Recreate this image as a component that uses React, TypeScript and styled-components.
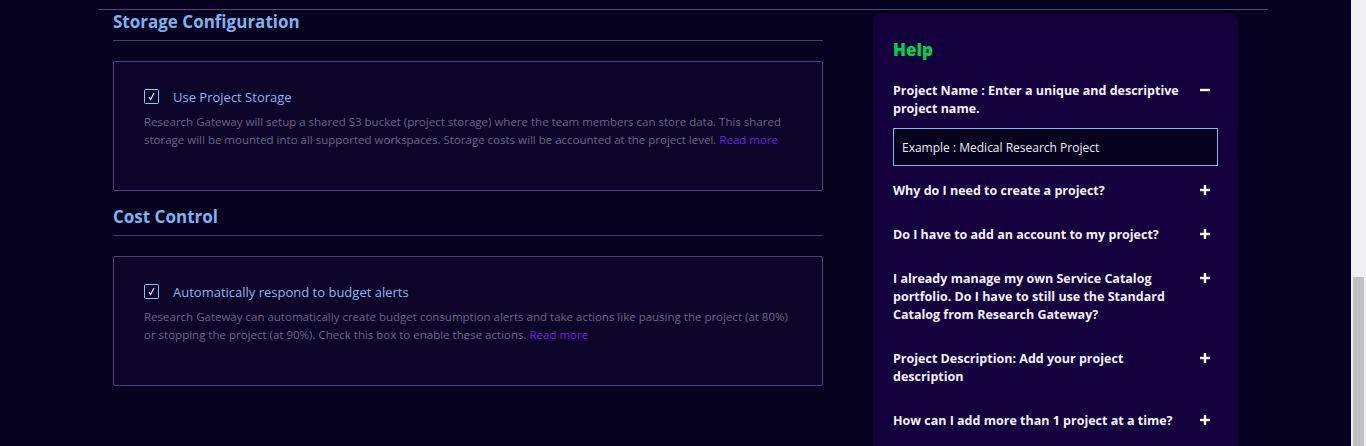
import React from 'react';
import styled, { createGlobalStyle } from 'styled-components';

const GlobalStyle = createGlobalStyle`
  body {
    margin: 0;
    background-color: #070220;
    font-family: 'Open Sans', 'Noto Sans', sans-serif;
  }
`;

interface IHelpItem {
  title: string;
  open?: boolean;
  example?: string;
}

const helpItems: IHelpItem[] = [
  {
    title: 'Project Name : Enter a unique and descriptive project name.',
    open: true,
    example: 'Example : Medical Research Project',
  },
  { title: 'Why do I need to create a project?' },
  { title: 'Do I have to add an account to my project?' },
  {
    title:
      'I already manage my own Service Catalog portfolio. Do I have to still use the Standard Catalog from Research Gateway?',
  },
  { title: 'Project Description: Add your project description' },
  { title: 'How can I add more than 1 project at a time?' },
];

function CheckIcon(): JSX.Element {
  return (
    <svg width="15" height="15" viewBox="0 0 15 15">
      <rect x="0.5" y="0.5" width="14" height="14" rx="1" fill="none" stroke="#8cc4f6" />
      <path d="M5 8.2 L6.6 10.6 L10 4" fill="none" stroke="#d8e8fb" strokeWidth="1.2" />
    </svg>
  );
}

function ToggleIcon({ open }: { open?: boolean }): JSX.Element {
  return (
    <svg width="10" height="10" viewBox="0 0 10 10">
      <rect x="0" y="3.8" width="10" height="2.4" fill="#ffffff" />
      {!open && <rect x="3.8" y="0" width="2.4" height="10" fill="#ffffff" />}
    </svg>
  );
}

function Section({
  title,
  label,
  children,
}: {
  title: string;
  label: string;
  children: React.ReactNode;
}): JSX.Element {
  return (
    <>
      <SectionTitle>{title}</SectionTitle>
      <OptionBox>
        <OptionRow>
          <CheckIcon />
          <OptionLabel>{label}</OptionLabel>
        </OptionRow>
        <OptionText>{children}</OptionText>
      </OptionBox>
    </>
  );
}

export default function App(): JSX.Element {
  return (
    <Page>
      <GlobalStyle />
      <Main>
        <Container>
          <Content>
            <FormColumn>
              <Section title="Storage Configuration" label="Use Project Storage">
                Research Gateway will setup a shared S3 bucket (project storage) where the
                team members can store data. This shared storage will be mounted into all
                supported workspaces. Storage costs will be accounted at the project level.{' '}
                <ReadMore href="#">Read more</ReadMore>
              </Section>
              <Section title="Cost Control" label="Automatically respond to budget alerts">
                Research Gateway can automatically create budget consumption alerts and take
                actions like pausing the project (at 80%) or stopping the project (at 90%).
                Check this box to enable these actions. <ReadMore href="#">Read more</ReadMore>
              </Section>
            </FormColumn>
            <HelpPanel>
              <HelpTitle>Help</HelpTitle>
              <HelpList>
                {helpItems.map(item => (
                  <HelpItem key={item.title}>
                    <HelpHeader>
                      <HelpQuestion>{item.title}</HelpQuestion>
                      <ToggleButton>
                        <ToggleIcon open={item.open} />
                      </ToggleButton>
                    </HelpHeader>
                    {item.open && item.example && <ExampleBox>{item.example}</ExampleBox>}
                  </HelpItem>
                ))}
              </HelpList>
            </HelpPanel>
          </Content>
        </Container>
      </Main>
      <ScrollTrack>
        <ScrollThumb />
      </ScrollTrack>
    </Page>
  );
}

const Page = styled.div`
  display: flex;
  height: 446px;
  overflow: hidden;
`;

const Main = styled.div`
  flex: 1;
  padding-top: 9px;
`;

const Container = styled.div`
  margin-left: 98px;
  width: 1170px;
  border-top: 1px solid #4f4a6e;
`;

const Content = styled.div`
  display: flex;
  gap: 50px;
  padding: 0 15px;
`;

const FormColumn = styled.div`
  width: 710px;
  display: flex;
  flex-direction: column;
`;

const SectionTitle = styled.h2`
  margin: 0 0 20px;
  padding: 1px 0 7px;
  font-size: 17px;
  line-height: 22px;
  font-weight: 700;
  color: #7cb4ee;
  border-bottom: 1px solid #423d6b;

  & ~ & {
    margin-top: 14px;
  }
`;

const OptionBox = styled.div`
  box-sizing: border-box;
  height: 130px;
  padding: 24px 30px 0;
  background-color: #0d0429;
  border: 1px solid #48417a;
  border-radius: 2px;
`;

const OptionRow = styled.div`
  display: flex;
  align-items: center;
  gap: 14px;
  height: 20px;
`;

const OptionLabel = styled.span`
  font-size: 13px;
  color: #8ab8ee;
  padding-top: 2px;
`;

const OptionText = styled.p`
  margin: 7px 0 0;
  font-size: 11.5px;
  line-height: 18px;
  color: #6a6588;
`;

const ReadMore = styled.a`
  color: #6b22e6;
  text-decoration: none;
`;

const HelpPanel = styled.aside`
  box-sizing: border-box;
  width: 365px;
  margin-top: 4px;
  height: 460px;
  padding: 25px 20px 0;
  background-color: #15003e;
  border-radius: 8px 8px 0 0;
`;

const HelpTitle = styled.h3`
  margin: 0 0 21px;
  font-size: 17px;
  line-height: 22px;
  font-weight: 800;
  color: #00d14e;
`;

const HelpList = styled.div`
  display: flex;
  flex-direction: column;
  gap: 26px;
`;

const HelpItem = styled.div`
  display: flex;
  flex-direction: column;
`;

const HelpHeader = styled.div`
  display: flex;
  align-items: flex-start;
`;

const HelpQuestion = styled.div`
  flex: 1;
  font-size: 12.5px;
  line-height: 18px;
  font-weight: 700;
  color: #f4f2ff;
`;

const ToggleButton = styled.span`
  width: 26px;
  height: 18px;
  display: flex;
  align-items: center;
  justify-content: center;
  margin-top: -1px;
`;

const ExampleBox = styled.div`
  margin: 10px 0 -10px;
  height: 38px;
  box-sizing: border-box;
  padding: 0 8px;
  display: flex;
  align-items: center;
  font-size: 12px;
  color: #ece9f8;
  background-color: #07021d;
  border: 1px solid #7cb8f2;
`;

const ScrollTrack = styled.div`
  width: 15px;
  background-color: #f1f1f1;
  display: flex;
  flex-direction: column;
  justify-content: flex-end;
  align-items: center;
`;

const ScrollThumb = styled.div`
  width: 11px;
  height: 169px;
  background-color: #c1c1c1;
`;
